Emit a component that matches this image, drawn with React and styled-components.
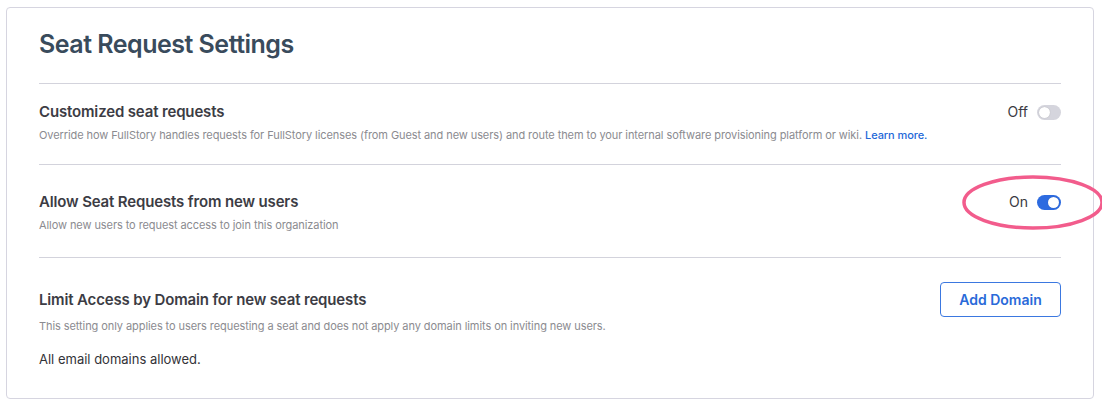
import React from 'react';
import styled, { createGlobalStyle } from 'styled-components';

const GlobalStyle = createGlobalStyle`
    html, body {
        margin: 0;
        background: #fff;
    }

    body {
        font-family: Inter, "Open Sans", Arial, sans-serif;
        color: #3c3c44;
        -webkit-font-smoothing: antialiased;
    }
`;

const Page = styled.div`
    padding: 7px 8px 0 6px;
`;

const Card = styled.section`
    border: 1px solid #d6d5e0;
    border-radius: 4px;
    padding: 20px 32px 29px 32px;
    background: #fff;
    height: 392px;
    box-sizing: border-box;
`;

const Heading = styled.h2`
    margin: 0 0 23px 0;
    font-size: 25px;
    line-height: 32px;
    font-weight: 600;
    color: #394b5c;
    letter-spacing: -0.5px;
`;

const Section = styled.div`
    display: grid;
    grid-template-columns: 1fr auto;
    align-items: center;
    row-gap: ${p => p.$gap}px;
    border-top: 1px solid #d3d3dc;
    padding: ${p => p.$pt}px 0 ${p => p.$pb}px 0;
`;

const Title = styled.div`
    font-size: 15px;
    line-height: 20px;
    font-weight: 600;
    color: #3c3c44;
    letter-spacing: -0.15px;
`;

const Desc = styled.div`
    grid-column: 1 / 2;
    font-size: 11px;
    line-height: 16px;
    color: #8b8b90;
    letter-spacing: -0.08px;

    a {
        color: #2468d8;
        font-weight: 500;
        text-decoration: none;
    }
`;

const Note = styled.div`
    grid-column: 1 / 2;
    margin-top: 14px;
    font-size: 13px;
    line-height: 20px;
    color: #333338;
`;

const Control = styled.div`
    position: relative;
    display: flex;
    align-items: center;
    gap: 9px;
    font-size: 14px;
    line-height: 20px;
    color: #3a3a42;
`;

const Track = styled.span`
    position: relative;
    display: inline-block;
    width: 24px;
    height: 15px;
    border-radius: 8px;
    background: ${p => (p.$on ? '#2d6be0' : '#d5d5dd')};

    &::after {
        content: '';
        position: absolute;
        top: 2px;
        left: ${p => (p.$on ? '11px' : '2px')};
        width: 11px;
        height: 11px;
        border-radius: 50%;
        background: #fff;
        box-shadow: 0 0 1px rgba(0, 0, 0, 0.25);
    }
`;

const Ring = styled.svg`
    position: absolute;
    left: -48px;
    top: -18px;
    overflow: visible;
    pointer-events: none;
`;

const OutlineButton = styled.button`
    height: 35px;
    width: 121px;
    border: 1px solid #3b78e0;
    border-radius: 4px;
    background: #fff;
    color: #2a6ad9;
    font-family: inherit;
    font-size: 14px;
    font-weight: 600;
    cursor: pointer;
`;

function Toggle({ on, label, circled }) {
    return (
        <Control>
            {label}
            <Track $on={on} />
            {circled && (
                <Ring width="144" height="57" viewBox="0 0 144 57">
                    <ellipse cx="72" cy="28.5" rx="69" ry="25.5" fill="none" stroke="#f25c8c" strokeWidth="3.5" />
                </Ring>
            )}
        </Control>
    );
}

export default function App() {
    return (
        <>
            <GlobalStyle />
            <Page>
                <Card>
                    <Heading>Seat Request Settings</Heading>

                    <Section $pt={18} $pb={21} $gap={5}>
                        <Title>Customized seat requests</Title>
                        <Toggle label="Off" on={false} />
                        <Desc>
                            Override how FullStory handles requests for FullStory licenses (from Guest and new users) and route them to your internal software provisioning platform or wiki.{' '}
                            <a href="#">Learn more.</a>
                        </Desc>
                    </Section>

                    <Section $pt={27} $pb={24} $gap={5}>
                        <Title>Allow Seat Requests from new users</Title>
                        <Toggle label="On" on circled />
                        <Desc>Allow new users to request access to join this organization</Desc>
                    </Section>

                    <Section $pt={24} $pb={0} $gap={1}>
                        <Title>Limit Access by Domain for new seat requests</Title>
                        <OutlineButton>Add Domain</OutlineButton>
                        <Desc>This setting only applies to users requesting a seat and does not apply any domain limits on inviting new users.</Desc>
                        <Note>All email domains allowed.</Note>
                    </Section>
                </Card>
            </Page>
        </>
    );
}
